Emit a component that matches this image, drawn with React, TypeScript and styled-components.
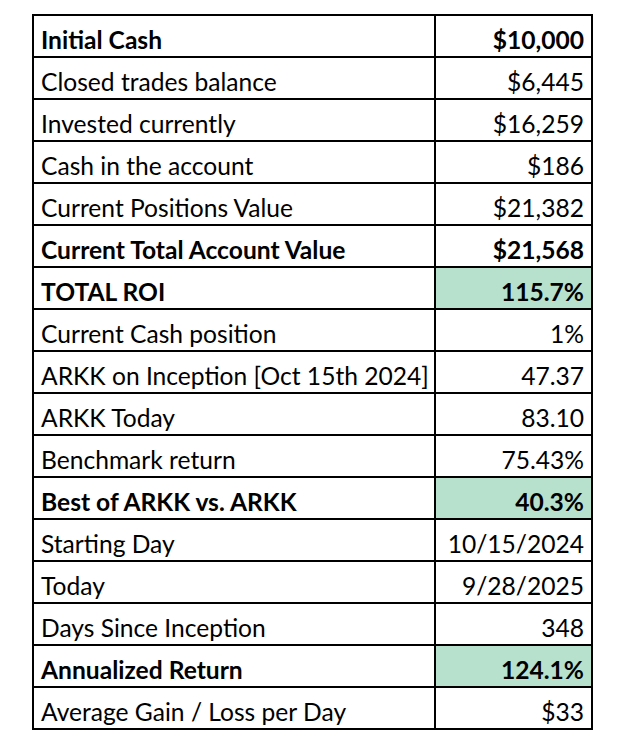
import React from "react";
import styled, { createGlobalStyle } from "styled-components";

const GlobalStyle = createGlobalStyle`
  html, body {
    margin: 0;
    padding: 0;
    background: #ffffff;
  }
`;

const Page = styled.div`
  padding: 14px 0 0 32px;
`;

const Sheet = styled.div`
  display: grid;
  grid-template-columns: 400px 155px;
  grid-auto-rows: 40px;
  gap: 2px;
  width: max-content;
  background: #000;
  border: 2px solid #000;
  font-family: Lato, "Liberation Sans", sans-serif;
  font-size: 24.6px;
  color: #000;
`;

const Cell = styled.div<{ $bold?: boolean; $right?: boolean; $hl?: boolean }>`
  display: flex;
  align-items: flex-end;
  justify-content: ${(p) => (p.$right ? "flex-end" : "flex-start")};
  padding: 0 ${(p) => (p.$right ? "7px" : "0")} 3px ${(p) => (p.$right ? "0" : "7px")};
  background: ${(p) => (p.$hl ? "#b7e1cd" : "#ffffff")};
  font-weight: ${(p) => (p.$bold ? 700 : 400)};
  line-height: 1;
  white-space: nowrap;
  overflow: hidden;
`;

type Row = { label: string; value: string; bold?: boolean; hl?: boolean };

const rows: Row[] = [
  { label: "Initial Cash", value: "$10,000", bold: true },
  { label: "Closed trades balance", value: "$6,445" },
  { label: "Invested currently", value: "$16,259" },
  { label: "Cash in the account", value: "$186" },
  { label: "Current Positions Value", value: "$21,382" },
  { label: "Current Total Account Value", value: "$21,568", bold: true },
  { label: "TOTAL ROI", value: "115.7%", bold: true, hl: true },
  { label: "Current Cash position", value: "1%" },
  { label: "ARKK on Inception [Oct 15th 2024]", value: "47.37" },
  { label: "ARKK Today", value: "83.10" },
  { label: "Benchmark return", value: "75.43%" },
  { label: "Best of ARKK vs. ARKK", value: "40.3%", bold: true, hl: true },
  { label: "Starting Day", value: "10/15/2024" },
  { label: "Today", value: "9/28/2025" },
  { label: "Days Since Inception", value: "348" },
  { label: "Annualized Return", value: "124.1%", bold: true, hl: true },
  { label: "Average Gain / Loss per Day", value: "$33" },
];

export default function App() {
  return (
    <>
      <GlobalStyle />
      <Page>
        <Sheet>
          {rows.map((r) => (
            <React.Fragment key={r.label}>
              <Cell $bold={r.bold}>{r.label}</Cell>
              <Cell $bold={r.bold} $hl={r.hl} $right>
                {r.value}
              </Cell>
            </React.Fragment>
          ))}
        </Sheet>
      </Page>
    </>
  );
}
